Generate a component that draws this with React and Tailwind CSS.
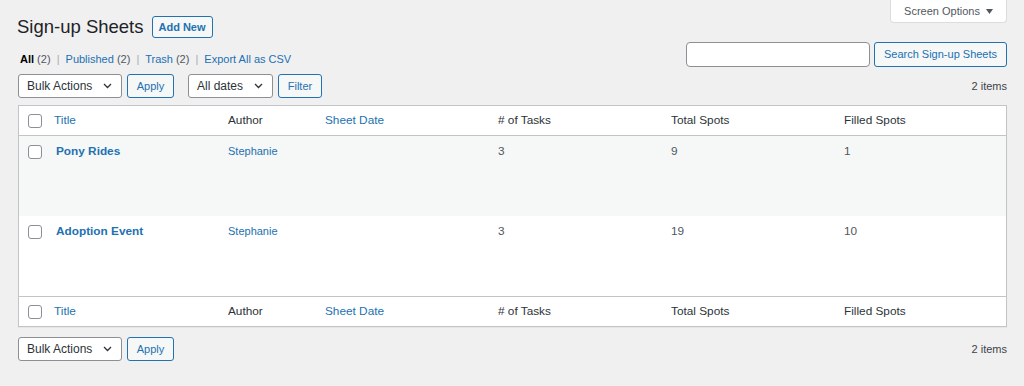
import React from 'react';

const cols = 'grid grid-cols-[27px_174px_97px_173px_173px_173px_1fr]';

const Chevron = () => (
    <svg width="9" height="6" viewBox="0 0 9 6" className="shrink-0">
        <path d="M1 1l3.5 3.5L8 1" fill="none" stroke="#2c3338" strokeWidth="1.3" />
    </svg>
);

const Select = ({ label, w }) => (
    <div className={`${w} h-[24px] bg-white border border-[#8c8f94] rounded-[3px] flex items-center justify-between pl-[8px] pr-[9px] text-[12px] text-[#2c3338]`}>
        <span>{label}</span>
        <Chevron />
    </div>
);

const Button = ({ children, w, h = 'h-[24px]' }) => (
    <button className={`${w} ${h} bg-[#f6f7f7] border border-[#2271b1] rounded-[3px] text-[11px] text-[#2271b1] flex items-center justify-center`}>
        {children}
    </button>
);

const Checkbox = () => (
    <div className="w-[14px] h-[14px] bg-white border border-[#8c8f94] rounded-[3px]"></div>
);

const HeadRow = ({ border }) => (
    <div className={`${cols} h-[30px] items-center text-[11.8px] text-[#2c3338] ${border}`}>
        <div className="pl-[9px] flex"><Checkbox /></div>
        <div className="pl-[8px] text-[#2271b1]">Title</div>
        <div className="pl-[8px]">Author</div>
        <div className="pl-[8px] text-[#2271b1]">Sheet Date</div>
        <div className="pl-[8px]"># of Tasks</div>
        <div className="pl-[8px]">Total Spots</div>
        <div className="pl-[8px]">Filled Spots</div>
    </div>
);

const Row = ({ title, tasks, total, filled, bg }) => (
    <div className={`${cols} h-[80px] items-start pt-[7px] text-[11.8px] text-[#50575e] ${bg}`}>
        <div className="pl-[9px] pt-[2px] flex"><Checkbox /></div>
        <div className="pl-[10px] text-[11.8px] font-bold text-[#2271b1]">{title}</div>
        <div className="pl-[8px] text-[11px] text-[#2271b1]">Stephanie</div>
        <div className="pl-[8px]"></div>
        <div className="pl-[8px]">{tasks}</div>
        <div className="pl-[8px]">{total}</div>
        <div className="pl-[8px]">{filled}</div>
    </div>
);

const Sep = () => <span className="text-[#a7aaad] mx-[3px]">|</span>;

export default function App() {
    return (
        <div className="min-h-screen bg-[#f0f0f1] pl-[18px] pr-[17px] font-['Liberation_Sans',Arial,sans-serif] text-[#3c434a]">
            {/* title row */}
            <div className="flex justify-between items-start">
                <div className="flex items-center gap-[8px] pt-[16px]">
                    <h1 className="text-[18.5px] leading-[22px] text-[#1d2327] -ml-[1px]">Sign-up Sheets</h1>
                    <Button w="w-[61px]" h="h-[22px]"><span className="font-bold">Add New</span></Button>
                </div>
                <div className="w-[117px] h-[23px] bg-white border border-t-0 border-[#dcdcde] rounded-b-[4px] flex items-center justify-center gap-[6px] text-[11px] text-[#50575e]">
                    <span>Screen Options</span>
                    <svg width="7" height="5" viewBox="0 0 7 5"><path d="M0 0h7L3.5 5z" fill="#50575e" /></svg>
                </div>
            </div>

            {/* views + search */}
            <div className="flex justify-between items-start mt-[4px]">
                <div className="pt-[11px] leading-[13px] text-[11px] text-[#50575e] pl-[2px]">
                    <span className="font-bold text-black">All</span> (2) <Sep />{' '}
                    <span className="text-[#2271b1]">Published</span> (2) <Sep />{' '}
                    <span className="text-[#2271b1]">Trash</span> (2) <Sep />{' '}
                    <span className="text-[#2271b1]">Export All as CSV</span>
                </div>
                <div className="flex gap-[4px]">
                    <div className="w-[184px] h-[25px] bg-white border border-[#8c8f94] rounded-[4px]"></div>
                    <Button w="w-[133px]" h="h-[25px]">Search Sign-up Sheets</Button>
                </div>
            </div>

            {/* top nav */}
            <div className="flex justify-between items-center mt-[7px] h-[24px]">
                <div className="flex items-center">
                    <Select label="Bulk Actions" w="w-[104px]" />
                    <div className="ml-[5px]"><Button w="w-[47px]">Apply</Button></div>
                    <div className="ml-[14px]"><Select label="All dates" w="w-[85px]" /></div>
                    <div className="ml-[5px]"><Button w="w-[44px]">Filter</Button></div>
                </div>
                <span className="text-[11px] text-[#3c434a]">2 items</span>
            </div>

            {/* table */}
            <div className="mt-[7px] bg-white border border-[#c3c4c7] shadow-[0_1px_1px_rgba(0,0,0,0.04)]">
                <HeadRow border="border-b border-[#c3c4c7]" />
                <Row title="Pony Rides" tasks="3" total="9" filled="1" bg="bg-[#f6f7f7]" />
                <Row title="Adoption Event" tasks="3" total="19" filled="10" bg="bg-white" />
                <HeadRow border="border-t border-[#c3c4c7]" />
            </div>

            {/* bottom nav */}
            <div className="flex justify-between items-center mt-[10px] h-[24px]">
                <div className="flex items-center">
                    <Select label="Bulk Actions" w="w-[104px]" />
                    <div className="ml-[5px]"><Button w="w-[47px]">Apply</Button></div>
                </div>
                <span className="text-[11px] text-[#3c434a]">2 items</span>
            </div>
        </div>
    );
}
